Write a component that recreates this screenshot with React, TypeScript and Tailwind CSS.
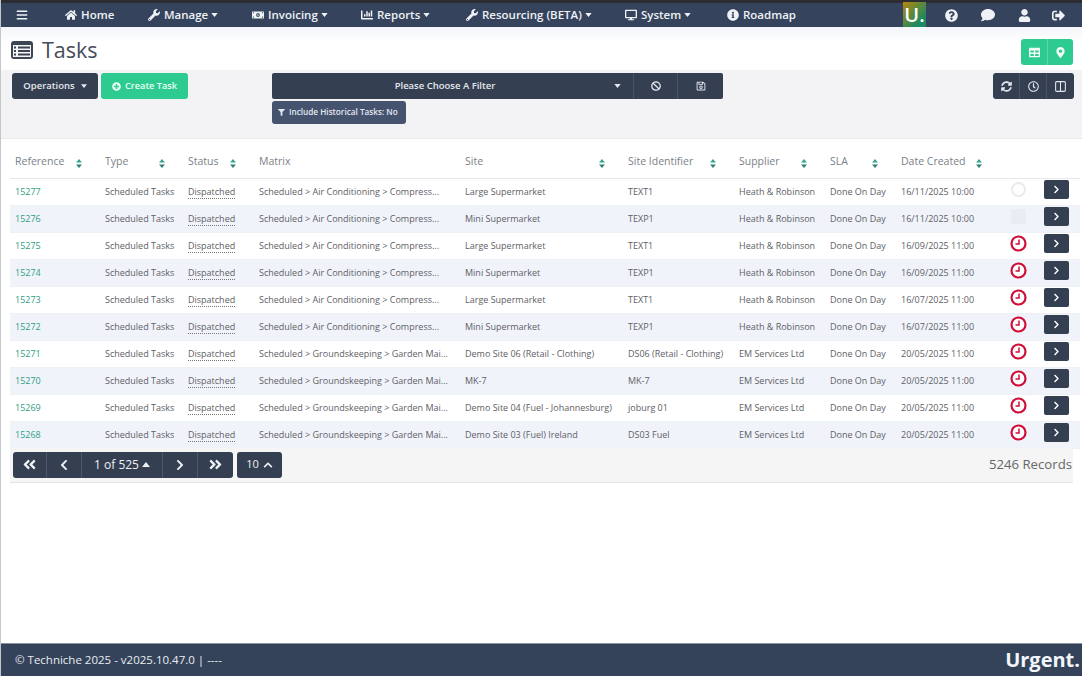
import React from "react";
import {
  FaHome, FaWrench, FaMoneyBillAlt, FaChartBar, FaDesktop, FaInfoCircle, FaQuestionCircle, FaComment, FaUser,
  FaSignOutAlt, FaBars, FaTable, FaMapMarkerAlt, FaSyncAlt, FaRegClock, FaBan, FaRegSave,
  FaFilter, FaPlusCircle, FaAngleDoubleLeft, FaAngleDoubleRight, FaChevronLeft, FaChevronRight, FaChevronUp,
} from "react-icons/fa";
import { Columns2 } from "lucide-react";

const Caret = ({ up = false, w = 8, h = 5 }: { up?: boolean; w?: number; h?: number }) => (
  <svg width={w} height={h} viewBox="0 0 8 5" className="shrink-0">
    <path d={up ? "M0 5 L4 0 L8 5 Z" : "M0 0 L8 0 L4 5 Z"} fill="currentColor" />
  </svg>
);

const Sort = () => (
  <svg width="6" height="9" viewBox="0 0 6 9" className="mt-[3px] shrink-0">
    <path d="M3 0 L6 3.4 L0 3.4 Z" fill="#36a58b" />
    <path d="M3 9 L6 5.6 L0 5.6 Z" fill="#2f7f73" />
  </svg>
);

const Clock = () => (
  <svg width="17" height="17" viewBox="0 0 17 17">
    <circle cx="8.5" cy="8.5" r="7" fill="#fff" stroke="#cf0f37" strokeWidth="2.2" />
    <path d="M9 4.5 V9 H5.5" fill="none" stroke="#cf0f37" strokeWidth="1.5" />
  </svg>
);

const ListAlt = () => (
  <svg width="22" height="18" viewBox="0 0 22 18">
    <rect x="0" y="0" width="22" height="18" rx="3" fill="#3d4553" />
    <rect x="2" y="4" width="18" height="12" fill="#f4f5f7" />
    <path d="M3 6.5 H5 M7 6.5 H19 M3 10 H5 M7 10 H19 M3 13.5 H5 M7 13.5 H19" stroke="#3d4553" strokeWidth="1.8" />
  </svg>
);

const NavItem = ({ w, icon, label, caret }: { w: string; icon: React.ReactNode; label: string; caret?: boolean }) => (
  <div className={`flex items-center gap-[4px] ${w}`}>
    <span className="flex w-[13px] justify-center text-[12px]">{icon}</span>
    <span>{label}</span>
    {caret && <span className="-ml-[1px]"><Caret w={7} h={4} /></span>}
  </div>
);

const rows = [
  ["15277", "Scheduled > Air Conditioning > Compress...", "Large Supermarket", "TEXT1", "Heath & Robinson", "16/11/2025 10:00", "circle"],
  ["15276", "Scheduled > Air Conditioning > Compress...", "Mini Supermarket", "TEXP1", "Heath & Robinson", "16/11/2025 10:00", "square"],
  ["15275", "Scheduled > Air Conditioning > Compress...", "Large Supermarket", "TEXT1", "Heath & Robinson", "16/09/2025 11:00", "clock"],
  ["15274", "Scheduled > Air Conditioning > Compress...", "Mini Supermarket", "TEXP1", "Heath & Robinson", "16/09/2025 11:00", "clock"],
  ["15273", "Scheduled > Air Conditioning > Compress...", "Large Supermarket", "TEXT1", "Heath & Robinson", "16/07/2025 11:00", "clock"],
  ["15272", "Scheduled > Air Conditioning > Compress...", "Mini Supermarket", "TEXP1", "Heath & Robinson", "16/07/2025 11:00", "clock"],
  ["15271", "Scheduled > Groundskeeping > Garden Mai...", "Demo Site 06 (Retail - Clothing)", "DS06 (Retail - Clothing)", "EM Services Ltd", "20/05/2025 11:00", "clock"],
  ["15270", "Scheduled > Groundskeeping > Garden Mai...", "MK-7", "MK-7", "EM Services Ltd", "20/05/2025 11:00", "clock"],
  ["15269", "Scheduled > Groundskeeping > Garden Mai...", "Demo Site 04 (Fuel - Johannesburg)", "joburg 01", "EM Services Ltd", "20/05/2025 11:00", "clock"],
  ["15268", "Scheduled > Groundskeeping > Garden Mai...", "Demo Site 03 (Fuel) Ireland", "DS03 Fuel", "EM Services Ltd", "20/05/2025 11:00", "clock"],
];

const headers: [string, boolean][] = [
  ["Reference", true], ["Type", true], ["Status", true], ["Matrix", false], ["Site", true],
  ["Site Identifier", true], ["Supplier", true], ["SLA", true], ["Date Created", true],
];

const colWidths = ["w-[90px]", "w-[83px]", "w-[71px]", "w-[206px]", "w-[163px]", "w-[111px]", "w-[91px]", "w-[71px]", "w-[104px]", "w-[40px]", "w-[40px]"];

export default function App() {
  return (
    <div className="flex h-[676px] w-[1082px] flex-col overflow-hidden border-l border-[#c4c6ca] bg-white text-[#5e6065] [font-family:'Open_Sans',sans-serif]">
      {/* Nav */}
      <header className="-ml-[1px] flex h-[27px] shrink-0 items-center border-t-[3px] border-[#2b2d33] bg-[#35445c] text-[11.5px] font-semibold text-[#eef1f5] shadow-[0_2px_4px_rgba(60,80,110,0.25)]">
        <div className="flex w-[64px] pl-[16px] text-[12px]"><FaBars /></div>
        <NavItem w="w-[83px]" icon={<FaHome />} label="Home" />
        <NavItem w="w-[104px]" icon={<FaWrench />} label="Manage" caret />
        <NavItem w="w-[109px]" icon={<FaMoneyBillAlt />} label="Invoicing" caret />
        <NavItem w="w-[105px]" icon={<FaChartBar />} label="Reports" caret />
        <NavItem w="w-[159px]" icon={<FaWrench />} label="Resourcing (BETA)" caret />
        <NavItem w="w-[102px]" icon={<FaDesktop />} label="System" caret />
        <NavItem w="w-[177px]" icon={<FaInfoCircle />} label="Roadmap" />
        <div className="flex h-[24px] w-[42px] items-start">
          <div className="-mt-[1px] flex h-[25px] w-[23px] items-center justify-center bg-[linear-gradient(135deg,#b8860b,#1f8a5f_75%)] text-[20px] font-semibold leading-none text-white">U.</div>
        </div>
        <div className="flex w-[36px] text-[13px]"><FaQuestionCircle /></div>
        <div className="flex w-[37px] text-[14px]"><FaComment /></div>
        <div className="flex w-[34px] text-[13px]"><FaUser /></div>
        <div className="flex text-[13px]"><FaSignOutAlt /></div>
      </header>

      {/* Title */}
      <div className="flex h-[43px] shrink-0 items-start justify-between bg-[linear-gradient(#f3f5f9,#ffffff_35%)] pl-[10px] pr-[9px] pt-[12px]">
        <div className="flex items-center gap-[9px]">
          <ListAlt />
          <h1 className="text-[21.5px] font-normal leading-none text-[#444c59]">Tasks</h1>
        </div>
        <div className="flex h-[26px] w-[52px] overflow-hidden rounded-[3px] bg-[#2dcb8f] text-[11px] text-[#f4fff9]">
          <div className="flex w-[27px] items-center justify-center border-r border-[#5cd9aa]"><FaTable /></div>
          <div className="flex flex-1 items-center justify-center"><FaMapMarkerAlt /></div>
        </div>
      </div>

      {/* Toolbar */}
      <div className="flex h-[69px] shrink-0 items-start border-b border-[#e8e9ec] bg-[#f3f3f5] pl-[11px] pr-[8px] pt-[3px] text-[9.5px] font-semibold text-[#e4e8ee]">
        <div className="flex h-[26px] w-[86px] items-center justify-center gap-[6px] rounded-[3px] bg-[#343f52]">
          Operations <Caret w={6} h={4} />
        </div>
        <div className="ml-[3px] flex h-[26px] w-[87px] items-center justify-center gap-[4px] rounded-[3px] bg-[#2dcb8f] text-[9.2px] text-[#eafff5]">
          <FaPlusCircle className="text-[9px]" /> Create Task
        </div>
        <div className="ml-[84px] flex w-[451px] flex-col gap-[2px]">
          <div className="flex h-[26px] overflow-hidden rounded-[2px] bg-[#343f52]">
            <div className="flex w-[361px] items-center pr-[12px]">
              <span className="flex-1 pl-[4px] text-center">Please Choose A Filter</span>
              <Caret w={7} h={4} />
            </div>
            <div className="flex w-[44px] items-center justify-center border-l border-[#465369] text-[10px]"><FaBan /></div>
            <div className="flex flex-1 items-center justify-center border-l border-[#465369] text-[10px]"><FaRegSave /></div>
          </div>
          <div className="flex h-[23px] w-[134px] items-center gap-[4px] whitespace-nowrap rounded-[3px] bg-[#45536e] pl-[6px] text-[8.2px]">
            <FaFilter className="text-[7px]" /> Include Historical Tasks: No
          </div>
        </div>
        <div className="ml-auto flex h-[26px] w-[81px] overflow-hidden rounded-[3px] bg-[#343f52] text-[11px]">
          <div className="flex w-[27px] items-center justify-center border-r border-[#465369]"><FaSyncAlt /></div>
          <div className="flex w-[27px] items-center justify-center border-r border-[#465369]"><FaRegClock /></div>
          <div className="flex flex-1 items-center justify-center"><Columns2 size={13} strokeWidth={2} /></div>
        </div>
      </div>

      {/* Table */}
      <div className="pl-[9px] pr-[9px]">
        <table className="w-[1063px] table-fixed border-collapse text-left text-[9px]">
          <colgroup>
            {colWidths.map((w, i) => <col key={i} className={w} />)}
          </colgroup>
          <thead>
            <tr className="h-[39px] border-b border-[#e6e8ec] text-[10.5px] text-[#7a7f87]">
              {headers.map(([h, s]) => (
                <th key={h} className="p-0 pl-[5px] pt-[8px] font-normal">
                  <div className="flex items-center justify-between pr-[18px]">
                    <span>{h}</span>
                    {s && <Sort />}
                  </div>
                </th>
              ))}
              <th className="p-0" /><th className="p-0" />
            </tr>
          </thead>
          <tbody>
            {rows.map((r, i) => (
              <tr key={r[0]} className={`h-[27px] border-b border-[#eef0f4] ${i % 2 ? "bg-[#f0f4fa]" : "bg-white"}`}>
                <td className="p-0 pl-[5px] text-[#2f9d83]">{r[0]}</td>
                <td className="p-0 pl-[5px]">Scheduled Tasks</td>
                <td className="p-0 pl-[5px]"><span className="border-b border-dotted border-[#777]">Dispatched</span></td>
                <td className="p-0 pl-[5px]">{r[1]}</td>
                <td className="p-0 pl-[5px]">{r[2]}</td>
                <td className="whitespace-nowrap p-0 pl-[5px]">{r[3]}</td>
                <td className="whitespace-nowrap p-0 pl-[5px]">{r[4]}</td>
                <td className="whitespace-nowrap p-0 pl-[5px]">Done On Day</td>
                <td className="whitespace-nowrap p-0 pl-[5px]">{r[5]}</td>
                <td className="p-0">
                  <div className="mb-[5px] flex w-[40px] justify-center pr-[4px]">
                    {r[6] === "clock" && <Clock />}
                    {r[6] === "circle" && <div className="h-[15px] w-[15px] rounded-full border-2 border-[#e9eaec] bg-white" />}
                    {r[6] === "square" && <div className="h-[15px] w-[15px] rounded-[2px] bg-[#e9edf2]" />}
                  </div>
                </td>
                <td className="p-0">
                  <div className="mb-[5px] ml-[4px] flex h-[19px] w-[25px] items-center justify-center rounded-[2px] bg-[#343f52] text-[9px] text-white"><FaChevronRight /></div>
                </td>
              </tr>
            ))}
          </tbody>
        </table>

        {/* Pagination */}
        <div className="-mt-[1px] flex h-[35px] w-[1063px] items-start border-b border-[#e4e5e8] bg-[#f5f5f6] pl-[3px] pr-[1px] pt-[4px]">
          <div className="flex h-[26px] w-[220px] overflow-hidden rounded-[3px] bg-[#343f52] text-[#eef1f5]">
            <div className="flex w-[34px] items-center justify-center border-r border-[#4a576c] text-[15px]"><FaAngleDoubleLeft /></div>
            <div className="flex w-[35px] items-center justify-center border-r border-[#4a576c] text-[12px]"><FaChevronLeft /></div>
            <div className="flex w-[81px] items-center justify-center gap-[3px] border-r border-[#4a576c] text-[12px]">1 of 525 <Caret up /></div>
            <div className="flex w-[35px] items-center justify-center border-r border-[#4a576c] text-[12px]"><FaChevronRight /></div>
            <div className="flex flex-1 items-center justify-center text-[15px]"><FaAngleDoubleRight /></div>
          </div>
          <div className="ml-[4px] flex h-[26px] w-[45px] items-center justify-center gap-[4px] rounded-[3px] bg-[#343f52] text-[11px] text-[#eef1f5]">
            10 <FaChevronUp className="text-[10px]" />
          </div>
          <div className="ml-auto mt-[3px] text-[13.2px] leading-[18px] text-[#666]">5246 Records</div>
        </div>
      </div>

      <div className="flex-1" />

      {/* Footer */}
      <footer className="-ml-[1px] flex h-[33px] shrink-0 items-center justify-between border-t border-[#8b93a0] bg-[#34435a] pl-[15px] pr-[2px] text-white">
        <span className="text-[11.5px] font-medium text-[#e9edf2]">© Techniche 2025 - v2025.10.47.0 | ----</span>
        <span className="text-[20px] font-bold leading-none text-[#f2f6fa]">Urgent.</span>
      </footer>
    </div>
  );
}
